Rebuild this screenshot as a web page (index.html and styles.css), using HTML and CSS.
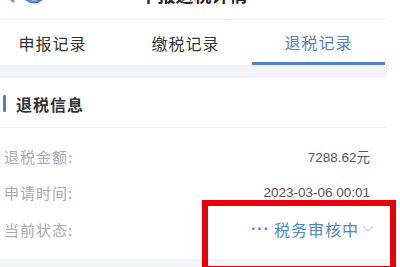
FILE: index.html
```html
<!DOCTYPE html>
<html lang="zh-CN">
<head>
  <meta charset="UTF-8">
  <title>退税记录</title>
  <link rel="stylesheet" href="styles.css">
</head>
<body>
  <div class="page">
    <div class="topbar">
      <div class="topbar-inner">
        <svg class="back" width="44" height="40" viewBox="0 0 44 40">
          <path d="M12 12 L4 20 L12 28" fill="none" stroke="#7d93c4" stroke-width="2.5"/>
          <ellipse cx="32" cy="20" rx="10" ry="8" fill="none" stroke="#5d7fd0" stroke-width="3"/>
        </svg>
        <div class="title">申报退税详情</div>
      </div>
    </div>

    <div class="tabs">
      <div class="tab">申报记录</div>
      <div class="tab">缴税记录</div>
      <div class="tab active">退税记录</div>
    </div>

    <div class="gap"></div>

    <div class="card">
      <div class="card-head">
        <span class="mark"></span>
        <span class="card-title">退税信息</span>
      </div>
      <div class="rows">
        <div class="row">
          <span class="label">退税金额:</span>
          <span class="value">7288.62元</span>
        </div>
        <div class="row">
          <span class="label">申请时间:</span>
          <span class="value">2023-03-06 00:01</span>
        </div>
        <div class="row">
          <span class="label">当前状态:</span>
          <span class="status">
            <span class="dots">···</span>税务审核中
            <svg class="chevron" width="12" height="8" viewBox="0 0 12 8">
              <path d="M1 1 L6 6 L11 1" fill="none" stroke="#cfd3da" stroke-width="1.2"/>
            </svg>
          </span>
        </div>
      </div>
      <div class="highlight"></div>
    </div>

    <div class="gap"></div>
  </div>
</body>
</html>
```

FILE: styles.css
```css
body {
  margin: 0;
  background: #fff;
  font-family: "Noto Sans CJK SC", "Liberation Sans", sans-serif;
  overflow: hidden;
}

.page {
  width: 387px;
  position: relative;
}

.topbar {
  height: 19px;
  overflow: hidden;
  border-bottom: 1px solid #eceef1;
}

.topbar-inner {
  height: 40px;
  margin-top: -26px;
  display: flex;
  align-items: center;
  position: relative;
}

.back {
  margin-left: 2px;
}

.title {
  position: absolute;
  left: 0;
  right: 0;
  text-align: center;
  font-size: 18px;
  color: #222;
  font-weight: bold;
}

.tabs {
  display: grid;
  grid-template-columns: 133px 133px 134px;
  margin-left: -14px;
  width: 400px;
  height: 45px;
}

.tab {
  display: flex;
  align-items: center;
  justify-content: center;
  font-size: 16px;
  color: #333;
  letter-spacing: 1px;
  box-sizing: border-box;
  padding-top: 1px;
}

.tab.active {
  color: #4f7fc4;
  border-bottom: 3px solid #4f7fd0;
  margin-right: 1px;
}

.gap {
  height: 13px;
  background: #f4f5f8;
}

.card {
  position: relative;
  background: #fff;
  height: 181px;
}

.card-head {
  height: 50px;
  display: flex;
  align-items: center;
  border-bottom: 1px solid #eff0f2;
  padding-top: 2px;
  box-sizing: border-box;
}

.mark {
  width: 3px;
  height: 17px;
  background: #4f7fd0;
  margin-left: 3px;
  margin-right: 10px;
  border-radius: 1px;
}

.card-title {
  font-size: 16px;
  font-weight: bold;
  color: #333;
  letter-spacing: 1px;
}

.rows {
  padding: 10px 17px 0 4px;
}

.row {
  height: 36.5px;
  display: flex;
  align-items: center;
  justify-content: space-between;
}

.label {
  font-size: 15px;
  color: #aaa;
  letter-spacing: 1px;
}

.value {
  font-family: "Liberation Sans", "Noto Sans CJK SC", sans-serif;
  font-size: 13.5px;
  color: #555;
}

.status {
  display: flex;
  align-items: center;
  font-size: 16px;
  color: #4f86c8;
  letter-spacing: 1px;
  margin-right: -4px;
}

.dots {
  font-family: "Liberation Sans", sans-serif;
  font-weight: bold;
  margin-right: 4px;
}

.chevron {
  margin-left: 3px;
}

.highlight {
  position: absolute;
  left: 202px;
  top: 122px;
  width: 182px;
  height: 60px;
  border: 6px solid #e8000b;
}
```
